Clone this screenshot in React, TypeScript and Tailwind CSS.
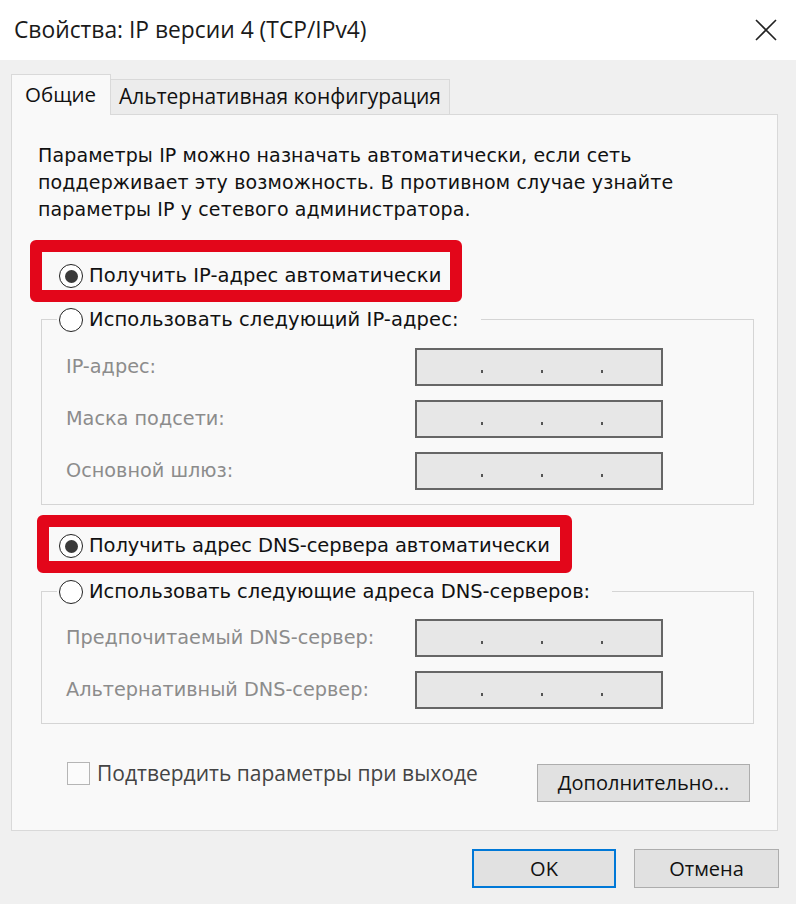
import React from "react";

function Radio({ checked }: { checked?: boolean }) {
  return (
    <span className="w-[24px] h-[24px] rounded-full border-[1.5px] border-[#222] bg-white flex items-center justify-center shrink-0">
      {checked && <span className="w-[13px] h-[13px] rounded-full bg-[#3a3a3a]" />}
    </span>
  );
}

function IpInput() {
  return (
    <div className="w-[248px] h-[38px] border-2 border-[#666] bg-[#e7e7e7] flex items-end pb-[11px] pl-[64px] gap-[58px]">
      <span className="w-[2px] h-[3px] bg-[#555]" />
      <span className="w-[2px] h-[3px] bg-[#555]" />
      <span className="w-[2px] h-[3px] bg-[#555]" />
    </div>
  );
}

function Row({ label }: { label: string }) {
  return (
    <div className="flex items-center h-[38px]">
      <span className="font-['DejaVu_Sans',sans-serif] text-[19.25px] text-[#8c8c8c] w-[349px] whitespace-nowrap">
        {label}
      </span>
      <IpInput />
    </div>
  );
}

function Legend({ text, tight }: { text: string; tight?: boolean }) {
  return (
    <div className="-mt-[12px] ml-[15px] w-fit bg-[#f9f9f9] pl-[2px] pr-[22px] flex items-center gap-[6px] h-[24px]">
      <Radio />
      <span
        className={
          tight
            ? "font-['DejaVu_Sans',sans-serif] text-[19.5px] tracking-[-0.05px] text-[#111] whitespace-nowrap"
            : "font-['DejaVu_Sans',sans-serif] text-[19.5px] tracking-[0.1px] text-[#111] whitespace-nowrap"
        }
      >
        {text}
      </span>
    </div>
  );
}

export default function App() {
  return (
    <div className="w-[796px] h-[904px] bg-[#f0f0f0] flex flex-col overflow-hidden">
      {/* title bar */}
      <div className="h-[60px] bg-white flex items-center justify-between pl-[14px] pr-[19px] shrink-0">
        <span className="font-['Open_Sans',sans-serif] text-[22.8px] text-[#1a1a1a]">
          Свойства: IP версии 4 (TCP/IPv4)
        </span>
        <svg width="22" height="22" viewBox="0 0 22 22">
          <path d="M1 1 L21 21 M21 1 L1 21" stroke="#222" strokeWidth="1.6" fill="none" />
        </svg>
      </div>

      {/* body */}
      <div className="pl-[11px] pt-[14px] flex flex-col">
        <div className="flex items-end h-[41px]">
          <div className="relative z-10 w-[100px] h-[41px] border border-b-0 border-[#d9d9d9] bg-[#f9f9f9] flex items-center pl-[13px] pb-[2px]">
            <span className="font-['Open_Sans',sans-serif] text-[20.5px] text-[#111]">Общие</span>
          </div>
          <div className="w-[339px] h-[36px] border border-l-0 border-[#d9d9d9] bg-[#ececec] flex items-center pl-[8px]">
            <span className="font-['Open_Sans',sans-serif] text-[21px] text-[#111] whitespace-nowrap">
              Альтернативная конфигурация
            </span>
          </div>
        </div>

        <div className="relative z-0 -mt-px w-[767px] h-[717px] border border-[#d9d9d9] bg-[#f9f9f9] flex flex-col">
          <p className="mt-[27px] ml-[26px] font-['DejaVu_Sans',sans-serif] text-[19px] tracking-[0.13px] leading-[27px] text-[#111] whitespace-nowrap">
            Параметры IP можно назначать автоматически, если сеть
            <br />
            поддерживает эту возможность. В противном случае узнайте
            <br />
            параметры IP у сетевого администратора.
          </p>

          {/* red box 1 */}
          <div className="ml-[18px] mt-[17px] w-[432px] h-[62px] border-[12px] border-[#e3061a] rounded-[6px] flex items-center pl-[17px] pt-[10px] gap-[6px]">
            <Radio checked />
            <span className="font-['DejaVu_Sans',sans-serif] text-[19.5px] tracking-[0.05px] text-[#111] whitespace-nowrap">
              Получить IP-адрес автоматически
            </span>
          </div>

          {/* group 1 */}
          <div className="ml-[29px] mt-[17px] w-[713px] border border-[#d5d5d5] pb-[14px]">
            <Legend text="Использовать следующий IP-адрес:" />
            <div className="pl-[24px] mt-[16px] flex flex-col gap-[14px]">
              <Row label="IP-адрес:" />
              <Row label="Маска подсети:" />
              <Row label="Основной шлюз:" />
            </div>
          </div>

          {/* red box 2 */}
          <div className="ml-[25px] mt-[10px] w-[535px] h-[58px] border-[12px] border-[#e3061a] rounded-[6px] flex items-center pl-[10px] pt-[4px] gap-[6px]">
            <Radio checked />
            <span className="font-['DejaVu_Sans',sans-serif] text-[19.5px] tracking-[-0.1px] text-[#111] whitespace-nowrap">
              Получить адрес DNS-сервера автоматически
            </span>
          </div>

          {/* group 2 */}
          <div className="ml-[29px] mt-[18px] w-[713px] border border-[#d5d5d5] pb-[14px]">
            <Legend text="Использовать следующие адреса DNS-серверов:" tight />
            <div className="pl-[24px] mt-[15px] flex flex-col gap-[14px]">
              <Row label="Предпочитаемый DNS-сервер:" />
              <Row label="Альтернативный DNS-сервер:" />
            </div>
          </div>

          {/* bottom row */}
          <div className="ml-[55px] mr-[27px] mt-[38px] flex items-start justify-between">
            <div className="flex items-center gap-[7px] h-[23px]">
              <span className="w-[23px] h-[23px] border border-[#b5b5b5] bg-[#fbfbfb]" />
              <span className="font-['Open_Sans',sans-serif] text-[21px] text-[#444] whitespace-nowrap">
                Подтвердить параметры при выходе
              </span>
            </div>
            <div className="mt-[2px] w-[213px] h-[38px] border border-[#adadad] bg-[#e1e1e1] flex items-center justify-center">
              <span className="font-['Open_Sans',sans-serif] text-[20px] text-[#111]">Дополнительно...</span>
            </div>
          </div>
        </div>
      </div>

      {/* footer */}
      <div className="mt-[18px] flex justify-end gap-[18px] pr-[17px]">
        <div className="w-[144px] h-[39px] border-2 border-[#0078d7] bg-[#e1e1e1] flex items-center justify-center">
          <span className="font-['Open_Sans',sans-serif] text-[20px] text-[#111]">OK</span>
        </div>
        <div className="w-[145px] h-[39px] border border-[#adadad] bg-[#e1e1e1] flex items-center justify-center">
          <span className="font-['Open_Sans',sans-serif] text-[20px] text-[#111]">Отмена</span>
        </div>
      </div>
    </div>
  );
}
